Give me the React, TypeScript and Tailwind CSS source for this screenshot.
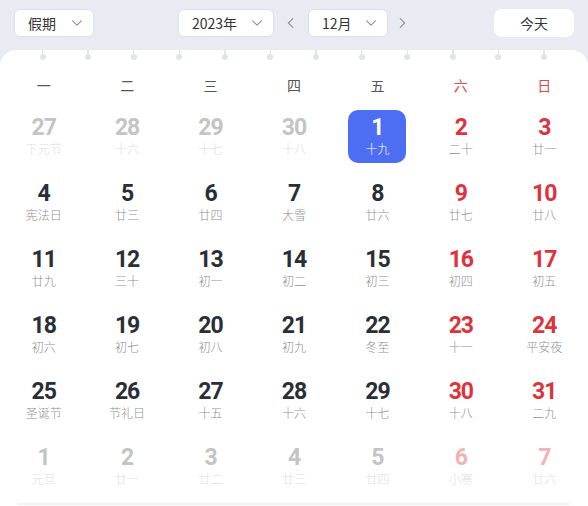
import React from 'react';

const rows: [number, string][][] = [
  [[27, '下元节'], [28, '十六'], [29, '十七'], [30, '十八'], [1, '十九'], [2, '二十'], [3, '廿一']],
  [[4, '宪法日'], [5, '廿三'], [6, '廿四'], [7, '大雪'], [8, '廿六'], [9, '廿七'], [10, '廿八']],
  [[11, '廿九'], [12, '三十'], [13, '初一'], [14, '初二'], [15, '初三'], [16, '初四'], [17, '初五']],
  [[18, '初六'], [19, '初七'], [20, '初八'], [21, '初九'], [22, '冬至'], [23, '十一'], [24, '平安夜']],
  [[25, '圣诞节'], [26, '节礼日'], [27, '十五'], [28, '十六'], [29, '十七'], [30, '十八'], [31, '二九']],
  [[1, '元旦'], [2, '廿一'], [3, '廿二'], [4, '廿三'], [5, '廿四'], [6, '小寒'], [7, '廿六']],
];

const weekdays = ['一', '二', '三', '四', '五', '六', '日'];

const Chevron = ({ dir = 'down' }: { dir?: 'down' | 'left' | 'right' }) => {
  const d = dir === 'down' ? 'M3 5.5l5 5 5-5' : dir === 'left' ? 'M10 3L5 8l5 5' : 'M6 3l5 5-5 5';
  return (
    <svg width="14" height="14" viewBox="0 0 16 16" fill="none">
      <path d={d} stroke="#909399" strokeWidth="1.3" strokeLinecap="round" strokeLinejoin="round" />
    </svg>
  );
};

const Select = ({ label, w }: { label: string; w: string }) => (
  <div className={`${w} h-[28px] bg-white border border-[#dcdfe6] rounded-[6px] flex items-center justify-between pl-[13px] pr-[9px] text-[14px] text-[#333]`}>
    <span>{label}</span>
    <Chevron />
  </div>
);

const Cell = ({ day, col, row }: { day: [number, string]; col: number; row: number }) => {
  const [d, lunar] = day;
  const cur = !((row === 0 && d > 20) || (row === 5 && d < 10));
  const weekend = col >= 5;
  const sel = row === 0 && d === 1;
  let numColor = cur ? (weekend ? 'text-[#e0323b]' : 'text-[#2a2e35]') : weekend ? 'text-[#f3b2b5]' : 'text-[#c4c4c4]';
  let lunarColor = cur ? 'text-[#909090]' : 'text-[#dedede]';
  if (sel) {
    numColor = 'text-white';
    lunarColor = 'text-white';
  }
  return (
    <div className="h-[66px] flex items-center justify-center">
      <div
        className={`w-[58px] h-[53px] rounded-[10px] flex flex-col items-center justify-center ${sel ? 'bg-[#4d6ef2]' : ''}`}
      >
        <span className={`font-['Roboto'] font-bold text-[23px] leading-[24px] tracking-[-1px] ${numColor}`}>{d}</span>
        <span className={`text-[12px] leading-[16px] mt-[1px] font-light ${lunarColor}`}>{lunar}</span>
      </div>
    </div>
  );
};

export default function App() {
  return (
    <div className="w-[588px] h-[506px] bg-[#e9ebf2] overflow-hidden font-['Noto_Sans_CJK_SC','Noto_Sans',sans-serif]">
      <div className="h-[50px] flex items-center px-[14px] pb-[4px]">
        <Select label="假期" w="w-[80px]" />
        <div className="ml-[84px] flex items-center">
          <Select label="2023年" w="w-[96px]" />
          <div className="w-[34px] flex justify-center">
            <Chevron dir="left" />
          </div>
          <Select label="12月" w="w-[80px]" />
          <div className="w-[28px] flex justify-center">
            <Chevron dir="right" />
          </div>
        </div>
        <button className="ml-auto w-[80px] h-[28px] bg-white rounded-[8px] text-[14px] text-[#333]">今天</button>
      </div>
      <div className="bg-white rounded-t-[16px] h-[456px] relative">
        <div className="absolute left-[40px] top-0 flex gap-[40.6px]">
          {Array.from({ length: 12 }).map((_, i) => (
            <div key={i} className="w-[5px] flex flex-col items-center">
              <div className="w-[1.5px] h-[5px] bg-[#e2e4ea]" />
              <div className="w-[6px] h-[6px] rounded-full bg-[#e2e4ea] -mt-[1px]" />
            </div>
          ))}
        </div>
        <div className="px-[2px] pt-[20px]">
          <div className="grid grid-cols-7 h-[30px] items-center">
            {weekdays.map((w, i) => (
              <div key={w} className={`text-center text-[14px] ${i >= 5 ? 'text-[#e0484e]' : 'text-[#555]'}`}>
                {w}
              </div>
            ))}
          </div>
          <div className="grid grid-cols-7 mt-[3px]">
            {rows.map((r, ri) => r.map((day, ci) => <Cell key={`${ri}-${ci}`} day={day} col={ci} row={ri} />))}
          </div>
          <div className="mx-[16px] mt-[4px] h-[2px] bg-[#f3f3f5]" />
        </div>
      </div>
    </div>
  );
}
